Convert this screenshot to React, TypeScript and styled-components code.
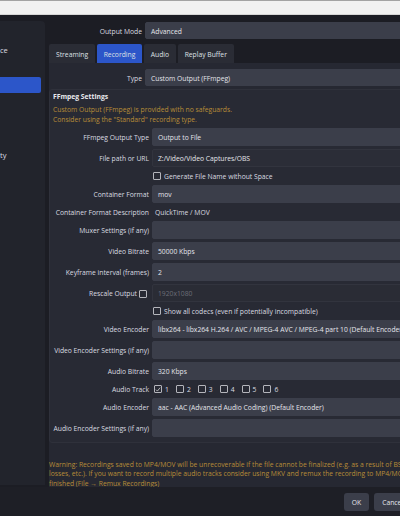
import React from 'react';
import styled, { createGlobalStyle } from 'styled-components';

const GlobalStyle = createGlobalStyle`
  html, body {
    margin: 0;
    padding: 0;
    background: #1c1d24;
    overflow: hidden;
  }
  * { box-sizing: border-box; }
`;

const Page = styled.div`
  width: 420px;
  height: 516px;
  display: flex;
  flex-direction: column;
  font-family: "Open Sans", "Noto Sans", sans-serif;
  font-size: 6.75px;
  color: #dadbe0;
`;

const TitleStrip = styled.div`
  flex: none;
  height: 15px;
  background: #f1f1f1;
  border-top: 1px solid #a3a3a3;
  border-bottom: 1px solid #d6d6d6;
`;

const Window = styled.div`
  flex: 1;
  min-height: 0;
  display: flex;
  flex-direction: column;
  background: #1c1d24;
`;

const Body = styled.div`
  flex: 1;
  display: flex;
  min-height: 0;
`;

const Sidebar = styled.div`
  width: 45px;
  margin-top: 6px;
  margin-bottom: 2px;
  background: #22242c;
  border-top-right-radius: 4px;
  padding-top: 3px;
  display: flex;
  flex-direction: column;
  gap: 1.5px;
`;

const NavItem = styled.div<{ $active?: boolean }>`
  flex: none;
  height: 16px;
  width: 41px;
  display: flex;
  align-items: center;
  border-radius: 0 2px 2px 0;
  background: ${p => (p.$active ? '#2c56c9' : 'transparent')};
  color: #dcdde2;
  font-size: 7.5px;
  white-space: nowrap;
`;

const Main = styled.div`
  flex: 1;
  display: flex;
  flex-direction: column;
  padding: 7px 0 0 4px;
  min-width: 0;
  & > * { flex-shrink: 0; }
`;

const FormRow = styled.div<{ $label: number }>`
  display: grid;
  grid-template-columns: ${p => p.$label}px 1fr;
  column-gap: 3px;
  align-items: center;
  min-height: 12px;
`;

const Label = styled.div<{ $pad?: number }>`
  white-space: nowrap;
  display: flex;
  justify-content: flex-end;
  align-items: center;
  gap: 2px;
  padding-top: 1px;
  padding-right: ${p => p.$pad ?? 0}px;
`;

const Field = styled.div<{ $kind?: 'select' | 'edit' | 'disabled' }>`
  height: ${p => (p.$kind === 'select' ? 17 : 18)}px;
  display: flex;
  align-items: center;
  padding: 1px 0 0 5px;
  border-radius: 2px;
  white-space: nowrap;
  overflow: hidden;
  color: ${p => (p.$kind === 'disabled' ? '#6c6e78' : '#e4e5ea')};
  background: ${p =>
    p.$kind === 'edit' ? '#2b2d37' : p.$kind === 'disabled' ? '#2a2c35' : '#3b3e4a'};
  border: 1px solid ${p => (p.$kind === 'select' || !p.$kind ? '#3b3e4a' : '#32343e')};
`;

const TabBar = styled.div`
  display: flex;
  gap: 1.5px;
  margin-top: 5px;
  height: 19px;
`;

const Tab = styled.div<{ $active?: boolean }>`
  display: flex;
  align-items: center;
  padding: 1px 7px 0;
  border-radius: 2px 2px 0 0;
  background: ${p => (p.$active ? '#2c56c9' : '#2a2c35')};
  color: #dfe0e5;
  white-space: nowrap;
`;

const TabPanel = styled.div`
  flex: 1 1 auto !important;
  min-height: 0;
  background: #262832;
  padding-top: 6px;
  display: flex;
  flex-direction: column;
  & > * { flex-shrink: 0; }
`;

const Group = styled.div`
  margin-top: 3px;
  background: #282a34;
  border: 1px solid #2f313b;
  border-radius: 3px;
  padding: 1px 0 5px 0;
  display: flex;
  flex-direction: column;
`;

const GroupTitle = styled.div`
  font-weight: 700;
  padding-left: 3px;
  height: 11px;
  line-height: 11px;
  color: #e8e9ee;
`;

const Caution = styled.div`
  color: #b88d38;
  line-height: 10px;
  padding-left: 3px;
  margin-top: 3px;
  white-space: nowrap;
`;

const Rows = styled.div`
  margin-top: 3px;
  display: flex;
  flex-direction: column;
  gap: 3px;
`;

const Plain = styled.div`
  padding: 1px 0 0 3px;
  white-space: nowrap;
`;

const Check = styled.span`
  width: 8px;
  height: 8px;
  border: 1px solid #b4b5bb;
  border-radius: 1px;
  display: inline-flex;
  align-items: center;
  justify-content: center;
  flex: none;
`;

const CheckLine = styled.div`
  display: flex;
  align-items: center;
  gap: 3px;
  padding-left: 1px;
  white-space: nowrap;
`;

const Tracks = styled.div`
  display: flex;
  align-items: center;
  gap: 6px;
  padding-left: 1px;
`;

const Warning = styled.div`
  margin-top: 17px;
  color: #b88d38;
  line-height: 9.3px;
  white-space: nowrap;
`;

const ButtonBar = styled.div`
  flex: none;
  height: 29px;
  display: flex;
  justify-content: flex-end;
  align-items: center;
  gap: 5px;
  padding: 0 9px 0 0;
  background: #1e1f26;
`;

const Button = styled.div`
  height: 18px;
  padding: 1px 8px 0;
  display: flex;
  align-items: center;
  background: #3b3e4a;
  border-radius: 3px;
  color: #e4e5ea;
`;

const Tick = () => (
  <svg width="7" height="7" viewBox="0 0 8 8">
    <path d="M1.3 4.2 L3.2 6.1 L6.8 1.6" fill="none" stroke="#e0e0e0" strokeWidth="1" />
  </svg>
);

const Box = ({ on }: { on?: boolean }) => <Check>{on && <Tick />}</Check>;

function App() {
  const L = 99;
  return (
    <>
      <GlobalStyle />
      <Page>
        <TitleStrip />
        <Window>
          <Body>
            <Sidebar>
              <NavItem />
              <NavItem>ce</NavItem>
              <NavItem />
              <NavItem $active />
              <NavItem />
              <NavItem />
              <NavItem />
              <NavItem>ty</NavItem>
            </Sidebar>
            <Main>
              <FormRow $label={93}>
                <Label>Output Mode</Label>
                <Field $kind="select">Advanced</Field>
              </FormRow>
              <TabBar>
                <Tab>Streaming</Tab>
                <Tab $active>Recording</Tab>
                <Tab>Audio</Tab>
                <Tab>Replay Buffer</Tab>
              </TabBar>
              <TabPanel>
                <FormRow $label={93}>
                  <Label>Type</Label>
                  <Field $kind="select">Custom Output (FFmpeg)</Field>
                </FormRow>
                <Group>
                  <GroupTitle>FFmpeg Settings</GroupTitle>
                  <Caution>
                    Custom Output (FFmpeg) is provided with no safeguards.
                    <br />
                    Consider using the "Standard" recording type.
                  </Caution>
                  <Rows>
                    <FormRow $label={L}>
                      <Label>FFmpeg Output Type</Label>
                      <Field>Output to File</Field>
                    </FormRow>
                    <FormRow $label={L}>
                      <Label>File path or URL</Label>
                      <Field $kind="edit">Z:/Video/Video Captures/OBS</Field>
                    </FormRow>
                    <FormRow $label={L}>
                      <span />
                      <CheckLine>
                        <Box />
                        Generate File Name without Space
                      </CheckLine>
                    </FormRow>
                    <FormRow $label={L}>
                      <Label>Container Format</Label>
                      <Field>mov</Field>
                    </FormRow>
                    <FormRow $label={L}>
                      <Label>Container Format Description</Label>
                      <Plain>QuickTime / MOV</Plain>
                    </FormRow>
                    <FormRow $label={L}>
                      <Label>Muxer Settings (if any)</Label>
                      <Field />
                    </FormRow>
                    <FormRow $label={L}>
                      <Label>Video Bitrate</Label>
                      <Field>50000 Kbps</Field>
                    </FormRow>
                    <FormRow $label={L}>
                      <Label>Keyframe interval (frames)</Label>
                      <Field>2</Field>
                    </FormRow>
                    <FormRow $label={L}>
                      <Label $pad={2}>
                        Rescale Output
                        <Box />
                      </Label>
                      <Field $kind="disabled">1920x1080</Field>
                    </FormRow>
                    <FormRow $label={L}>
                      <span />
                      <CheckLine>
                        <Box />
                        Show all codecs (even if potentially incompatible)
                      </CheckLine>
                    </FormRow>
                    <FormRow $label={L}>
                      <Label>Video Encoder</Label>
                      <Field>libx264 - libx264 H.264 / AVC / MPEG-4 AVC / MPEG-4 part 10 (Default Encoder)</Field>
                    </FormRow>
                    <FormRow $label={L}>
                      <Label>Video Encoder Settings (if any)</Label>
                      <Field />
                    </FormRow>
                    <FormRow $label={L}>
                      <Label>Audio Bitrate</Label>
                      <Field>320 Kbps</Field>
                    </FormRow>
                    <FormRow $label={L}>
                      <Label>Audio Track</Label>
                      <Tracks>
                        {[1, 2, 3, 4, 5, 6].map(n => (
                          <CheckLine key={n}>
                            <Box on={n === 1} />
                            {n}
                          </CheckLine>
                        ))}
                      </Tracks>
                    </FormRow>
                    <FormRow $label={L}>
                      <Label>Audio Encoder</Label>
                      <Field>aac - AAC (Advanced Audio Coding) (Default Encoder)</Field>
                    </FormRow>
                    <FormRow $label={L}>
                      <Label>Audio Encoder Settings (if any)</Label>
                      <Field />
                    </FormRow>
                  </Rows>
                </Group>
                <Warning>
                  Warning: Recordings saved to MP4/MOV will be unrecoverable if the file cannot be finalized (e.g. as a result of BSODs, power
                  <br />
                  losses, etc.). If you want to record multiple audio tracks consider using MKV and remux the recording to MP4/MOV after it is
                  <br />
                  finished (File → Remux Recordings)
                </Warning>
              </TabPanel>
            </Main>
          </Body>
          <ButtonBar>
            <Button>OK</Button>
            <Button>Cancel</Button>
          </ButtonBar>
        </Window>
      </Page>
    </>
  );
}

export default App;
